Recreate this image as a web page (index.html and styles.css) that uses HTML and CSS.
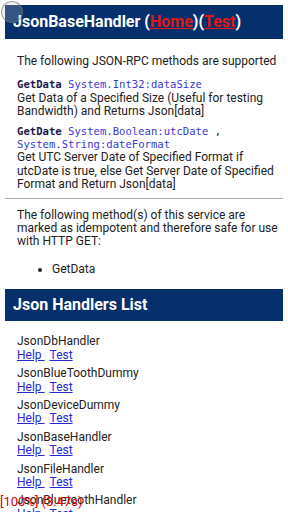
FILE: index.html
```html
<!DOCTYPE html>
<html lang="en">
<head>
  <meta charset="UTF-8" />
  <title>JsonBaseHandler</title>
  <meta name="viewport" content="width=device-width, initial-scale=1.0"/>
  <link rel="stylesheet" href="styles.css">
</head>
<body>

<div class="touch-dot"></div>

<div class="heading">
  JsonBaseHandler (<a class="head-link" href="#">Home</a>)(<a class="head-link" href="#">Test</a>)
</div>

<div class="content">
  <p class="intro">The following JSON-RPC methods are supported</p>

  <div class="method">
    <div class="sig"><b>GetData</b> <span class="param">System.Int32:dataSize</span></div>
    <div class="desc">Get Data of a Specified Size (Useful for testing Bandwidth) and Returns Json[data]</div>
  </div>

  <div class="method">
    <div class="sig"><b>GetDate</b> <span class="param">System.Boolean:utcDate</span> , <span class="param">System.String:dateFormat</span></div>
    <div class="desc">Get UTC Server Date of Specified Format if utcDate is true, else Get Server Date of Specified Format and Return Json[data]</div>
  </div>
</div>

<hr class="divider">

<div class="content">
  <p class="idem">The following method(s) of this service are marked as idempotent and therefore safe for use with HTTP GET:</p>
  <ul class="idem-list">
    <li>GetData</li>
  </ul>
</div>

<div class="heading list-heading">Json Handlers List</div>

<div class="content handlers">
  <div class="handler">JsonDbHandler<br><a class="help" href="#">Help </a> <a href="#">Test</a></div>
  <div class="handler">JsonBlueToothDummy<br><a class="help" href="#">Help </a> <a href="#">Test</a></div>
  <div class="handler">JsonDeviceDummy<br><a class="help" href="#">Help </a> <a href="#">Test</a></div>
  <div class="handler">JsonBaseHandler<br><a class="help" href="#">Help </a> <a href="#">Test</a></div>
  <div class="handler">JsonFileHandler<br><a class="help" href="#">Help </a> <a href="#">Test</a></div>
  <div class="handler">JsonBluetoothHandler<br><a class="help" href="#">Help </a> <a href="#">Test</a></div>
</div>

<div class="timing">[100%] (3.47s)</div>

</body>
</html>
```

FILE: styles.css
```css
body {
  font-family: Roboto, 'Noto Sans', sans-serif;
  font-size: 12px;
  line-height: 13.4px;
  color: #222;
  margin: 5px;
  background: white;
  overflow: hidden;
}

.touch-dot {
  position: absolute;
  left: 1px;
  top: 1px;
  width: 20px;
  height: 20px;
  border: 1.5px solid rgba(110,110,110,0.6);
  border-radius: 50%;
  background: rgba(200,200,200,0.25);
}

.heading {
  background: #05306b;
  color: white;
  font-weight: bold;
  font-size: 16px;
  line-height: 20px;
  padding: 7px 8px 7px;
}

.list-heading {
  padding: 6px 8px 6px;
}

.head-link {
  color: #e01818;
}

.content {
  padding: 0 2px 0 12px;
}

.intro {
  margin: 16px 0 10px;
}

.method {
  margin-bottom: 6px;
}

.sig {
  font-family: 'DejaVu Sans Mono', monospace;
  font-size: 10.6px;
  line-height: 13.4px;
}

.sig b {
  color: #1a1a50;
}

.param {
  color: #3a3ad0;
}

.divider {
  border: 0;
  border-top: 1px solid #aaa;
  margin: 5px 0 10px;
}

.idem {
  margin: 0;
}

.idem-list {
  margin: 14px 0 13px;
  padding-left: 35px;
}

.handlers {
  padding-top: 14px;
}

.handler {
  margin-bottom: 5px;
}

.handler a {
  color: #2828d8;
}

.help {
  margin-right: 5px;
}

.timing {
  position: absolute;
  left: 0;
  top: 495px;
  color: #e00000;
  font-family: Roboto, sans-serif;
  font-size: 13px;
}
```
